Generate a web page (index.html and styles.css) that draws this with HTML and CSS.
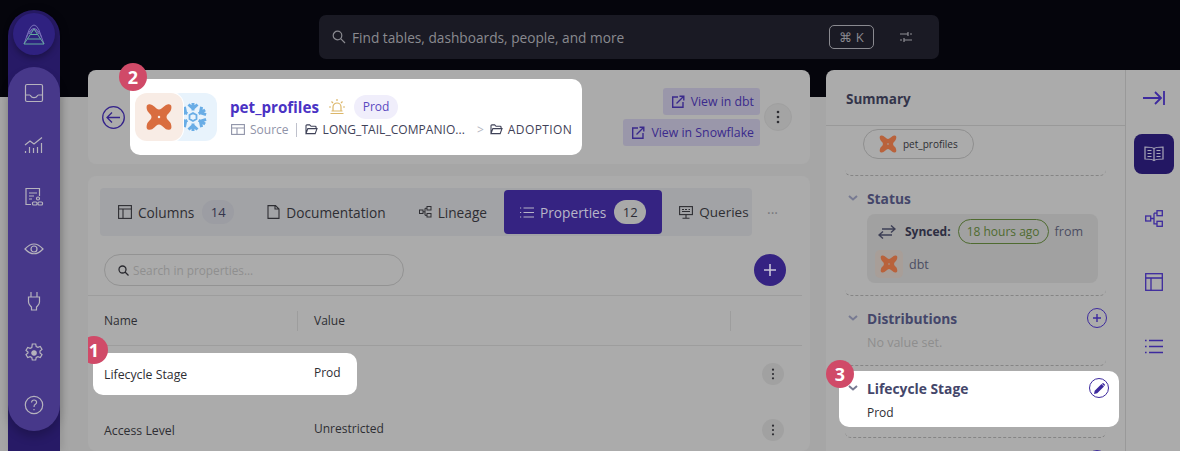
FILE: index.html
```html
<!DOCTYPE html>
<html lang="en">
<head>
    <meta charset="UTF-8">
    <meta name="viewport" content="width=device-width, initial-scale=1.0">
    <title>pet_profiles</title>
    <link rel="stylesheet" href="styles.css">
</head>
<body>
    <svg class="defs" width="0" height="0">
        <symbol id="dbt" viewBox="0 0 24 24">
            <path fill="currentColor" fill-rule="evenodd" d="M2.200 5.500Q1.500 2 4 1.800Q6 1.300 8.500 3.800L10 5.200Q12 6.800 14 5.200L15.700 3.800Q18 1.300 20 1.800Q22.500 2 21.800 5.500Q21.500 7.500 19.800 9L18.800 10Q17.200 12 18.800 14L19.800 15Q21.500 16.500 21.800 18.500Q22.500 22 20 22.200Q18 22.700 15.700 20.200L14 18.800Q12 17.200 10 18.800L8.500 20.200Q6 22.700 4 22.200Q1.500 22 2.200 18.500Q2.500 16.500 4.200 15L5.200 14Q6.800 12 5.200 10L4.200 9Q2.500 7.500 2.200 5.500ZM12 11a1 1 0 1 0 0 2a1 1 0 0 0 0-2Z"/>
        </symbol>
        <symbol id="folder" viewBox="0 0 14 12">
            <path fill="none" stroke="currentColor" stroke-width="1.2" d="M1 10.500V2a1 1 0 0 1 1-1h3l1.500 1.500H11a1 1 0 0 1 1 1V5M1 10.500L3 5h10l-2 5.500Z"/>
        </symbol>
        <symbol id="ext" viewBox="0 0 14 14">
            <path fill="none" stroke="currentColor" stroke-width="1.4" d="M7 2H1.700v10.300h10.300V7M5.500 8.500L12.500 1.500M8.500 1.200h4.300v4.300"/>
        </symbol>
        <symbol id="kebab" viewBox="0 0 4 14">
            <circle cx="2" cy="2" r="1.300" fill="currentColor"/><circle cx="2" cy="7" r="1.300" fill="currentColor"/><circle cx="2" cy="12" r="1.300" fill="currentColor"/>
        </symbol>
        <symbol id="chev" viewBox="0 0 10 6">
            <path fill="none" stroke="currentColor" stroke-width="2" d="M1 1l4 3.500L9 1"/>
        </symbol>
        <symbol id="flake-arm" viewBox="0 0 30 30" overflow="visible">
            <path d="M15 1v7.500M10.500 2.500L15 6.500l4.500-4"/>
        </symbol>
    </svg>

    <div class="app">
        <nav class="rail">
            <div class="rail-head">
                <div class="logo">
                    <svg width="22" height="22" viewBox="0 0 22 22" fill="none" stroke-width="1">
                        <path d="M1 21L6 7Q11-3 16 7L21 21" stroke="#7a70bb"/>
                        <path d="M3.500 14Q11-3 18.500 14" stroke="#7a70bb"/>
                        <path d="M6 11Q11 2 16 11" stroke="#7a70bb"/>
                        <path d="M11 6L21 21H1ZM7.500 11.500h7M4.500 16h13" stroke="#63ab9e"/>
                    </svg>
                </div>
            </div>
            <div class="rail-menu">
                <a class="rail-item"><svg width="20" height="20" viewBox="0 0 20 20"><rect x="1.500" y="1.500" width="17" height="17" rx="1.500"/><path d="M1.500 12h4q1 0 1.500 1.300t3 1.300t3-1.300t1.500-1.300h4"/></svg></a>
                <a class="rail-item"><svg width="20" height="20" viewBox="0 0 20 20"><path d="M1 10l5-4 4 3 8-6.500M1.500 18v-2M5.500 18v-6M9.500 18v-5M13.500 18v-6M17.500 18V8"/></svg></a>
                <a class="rail-item"><svg width="20" height="20" viewBox="0 0 20 20"><path d="M7 17.500H2V1.500h13.500v7.500M5 6h8M5 9h5M5 12h3"/><circle cx="14" cy="11.500" r="1.500"/><rect x="8.500" y="15" width="4.500" height="3" rx="1"/><rect x="14" y="15" width="4.500" height="3" rx="1"/></svg></a>
                <a class="rail-item"><svg width="20" height="20" viewBox="0 0 20 20"><path d="M1 10q9-10 18 0q-9 9.500-18 0Z"/><circle cx="10" cy="10" r="3"/></svg></a>
                <a class="rail-item"><svg width="20" height="20" viewBox="0 0 20 20"><path d="M7 1v5M13 1v5M4.500 6h11v5q0 2-2 4l-1 1v3h-5v-3l-1-1q-2-2-2-4Z"/></svg></a>
                <a class="rail-item"><svg width="20" height="20" viewBox="0 0 20 20"><path d="M8.300 1h3.400l.5 2.600 1.700.8 2.400-1 1.700 3-2 1.700v1.800l2 1.700-1.700 3-2.400-1-1.700.8-.5 2.600H8.300l-.5-2.600-1.700-.8-2.400 1-1.700-3 2-1.700V9.100l-2-1.700 1.700-3 2.400 1 1.700-.8Z"/><circle cx="10" cy="10" r="2.200" fill="currentColor"/></svg></a>
                <a class="rail-item"><svg width="20" height="20" viewBox="0 0 20 20"><circle cx="10" cy="10" r="8.700"/><path d="M7.500 7.500q.3-2.500 2.600-2.500t2.500 2.200q0 1.300-1.300 2.100T10 12"/><path d="M10 14v1.200"/></svg></a>
            </div>
        </nav>

        <div class="workspace">
            <header class="topbar">
                <div class="global-search">
                    <svg width="14" height="14" viewBox="0 0 14 14" fill="none" stroke="#8a8a90" stroke-width="1.200"><circle cx="5.500" cy="5.500" r="4.300"/><path d="M8.700 8.700L13 13"/></svg>
                    <span class="global-search-text">Find tables, dashboards, people, and more</span>
                    <span class="kbd">⌘ K</span>
                    <svg class="filter-icon" width="14" height="12" viewBox="0 0 14 12" fill="none" stroke="#8e8e94" stroke-width="1.200"><path d="M1 3h8M11 3h2M9 1v4M1 9h2M5 9h8M5 7v4"/></svg>
                </div>
            </header>

            <div class="panels">
                <main class="entity">
                    <section class="card entity-head">
                        <button class="back">
                            <svg width="23" height="23" viewBox="0 0 23 23" fill="none" stroke="#34238a" stroke-width="1.300"><circle cx="11.500" cy="11.500" r="10.800"/><path d="M18 11.500H5M10 6.500l-5 5 5 5"/></svg>
                        </button>
                        <div class="entity-info">
                            <span class="badge badge-two">2</span>
                            <div class="tiles">
                                <div class="tile tile-dbt"><svg width="30" height="30"><use href="#dbt"/></svg></div>
                                <div class="tile tile-snow">
                                    <svg class="flake" width="30" height="30" viewBox="0 0 30 30">
                                        <use href="#flake-arm"/>
                                        <use href="#flake-arm" transform="rotate(60 15 15)"/>
                                        <use href="#flake-arm" transform="rotate(120 15 15)"/>
                                        <use href="#flake-arm" transform="rotate(180 15 15)"/>
                                        <use href="#flake-arm" transform="rotate(240 15 15)"/>
                                        <use href="#flake-arm" transform="rotate(300 15 15)"/>
                                        <path d="M15 11l3.500 2v4L15 19l-3.500-2v-4Z" stroke-width="1.800"/>
                                    </svg>
                                </div>
                            </div>
                            <div class="entity-text">
                                <div class="entity-title">
                                    <span class="entity-name">pet_profiles</span>
                                    <svg width="16" height="16" viewBox="0 0 16 16" fill="none" stroke="#dcb76a" stroke-width="1.200"><path d="M4 12V8a4 4 0 0 1 8 0v4M1.500 14.500h13M2.500 12h11M8 0v2M2.500 2.500L4 4M13.500 2.500L12 4M0 8h2M14 8h2"/></svg>
                                    <span class="env-pill">Prod</span>
                                </div>
                                <div class="crumbs">
                                    <svg class="crumb-type" width="14" height="11" viewBox="0 0 14 11" fill="none" stroke="currentColor" stroke-width="1.100"><rect x=".6" y=".6" width="12.800" height="9.800"/><path d="M.6 4h12.800M6 4v6.400"/></svg>
                                    <span class="crumb-source">Source</span>
                                    <span class="crumb-sep"></span>
                                    <svg class="crumb-folder" width="13" height="11"><use href="#folder"/></svg>
                                    <span class="crumb-db">LONG_TAIL_COMPANIO...</span>
                                    <span class="crumb-arrow">&gt;</span>
                                    <svg class="crumb-folder" width="13" height="11"><use href="#folder"/></svg>
                                    <span class="crumb-schema">ADOPTION</span>
                                </div>
                            </div>
                        </div>
                        <div class="view-links">
                            <a class="view-link"><svg width="14" height="14"><use href="#ext"/></svg>View in dbt</a>
                            <a class="view-link"><svg width="14" height="14"><use href="#ext"/></svg>View in Snowflake</a>
                        </div>
                        <button class="more"><svg width="4" height="14"><use href="#kebab"/></svg></button>
                    </section>

                    <section class="card entity-body">
                        <div class="tabs-row">
                            <div class="tabs">
                                <a class="tab">
                                    <svg width="14" height="14" viewBox="0 0 14 14" fill="none" stroke="currentColor" stroke-width="1.100"><rect x=".6" y=".6" width="12.800" height="12.800"/><path d="M.6 4h12.800M5 4v9.400"/></svg>
                                    Columns<span class="count">14</span>
                                </a>
                                <a class="tab">
                                    <svg width="13" height="14" viewBox="0 0 13 14" fill="none" stroke="currentColor" stroke-width="1.100"><path d="M1 .6h7.500L12 4v9.400H1ZM8 .6V4h4"/></svg>
                                    Documentation
                                </a>
                                <a class="tab">
                                    <svg width="13" height="12" viewBox="0 0 13 12" fill="none" stroke="currentColor" stroke-width="1"><rect x=".5" y="4" width="3.500" height="3.500"/><rect x="8" y=".5" width="4" height="3.500"/><rect x="8" y="7.500" width="4" height="3.500"/><path d="M4 5.800h2M6 2.300v7h2M6 2.300h2"/></svg>
                                    Lineage
                                </a>
                                <a class="tab tab-active">
                                    <svg width="14" height="11" viewBox="0 0 14 11" fill="none" stroke="currentColor" stroke-width="1.100"><path d="M3.500 1H14M3.500 5.500H14M3.500 10H14M0 1h1.200M0 5.500h1.200M0 10h1.200"/></svg>
                                    Properties<span class="count">12</span>
                                </a>
                                <a class="tab">
                                    <svg width="14" height="13" viewBox="0 0 14 13" fill="none" stroke="currentColor" stroke-width="1.100"><rect x=".6" y=".6" width="12.800" height="8"/><path d="M7 8.600V12M3.500 12.300h7M3 3.500h2M6 3.500h2M9.500 3.500h1.500M3 5.500h8" /></svg>
                                    Queries
                                </a>
                            </div>
                            <span class="tabs-more">···</span>
                        </div>

                        <div class="toolbar">
                            <div class="prop-search">
                                <svg width="11" height="11" viewBox="0 0 11 11" fill="none" stroke="#2a2a30" stroke-width="1.300"><circle cx="4.500" cy="4.500" r="3.500"/><path d="M7 7l3.500 3.500"/></svg>
                                <span>Search in properties...</span>
                            </div>
                            <button class="add">
                                <svg width="12" height="12" viewBox="0 0 12 12" stroke="#c9c6d8" stroke-width="1.600"><path d="M6 0v12M0 6h12"/></svg>
                            </button>
                        </div>

                        <div class="prop-head">
                            <div class="prop-head-cell prop-head-name">Name</div>
                            <div class="prop-head-cell prop-head-value">Value</div>
                        </div>

                        <div class="prop-row">
                            <div class="prop-cells prop-cells-hl">
                                <span class="badge badge-one">1</span>
                                <span class="prop-name">Lifecycle Stage</span>
                                <span class="prop-value">Prod</span>
                            </div>
                            <button class="row-more"><svg width="4" height="12"><use href="#kebab"/></svg></button>
                        </div>
                        <div class="prop-row">
                            <div class="prop-cells">
                                <span class="prop-name">Access Level</span>
                                <span class="prop-value">Unrestricted</span>
                            </div>
                            <button class="row-more"><svg width="4" height="12"><use href="#kebab"/></svg></button>
                        </div>
                    </section>
                </main>

                <aside class="summary">
                    <div class="summary-main">
                        <h3 class="summary-title">Summary</h3>
                        <div class="section section-owner">
                            <span class="owner-pill"><svg class="dbt-dim" width="20" height="20"><use href="#dbt"/></svg>pet_profiles</span>
                        </div>
                        <div class="section">
                            <div class="section-head"><svg class="chev" width="10" height="6"><use href="#chev"/></svg><span>Status</span></div>
                            <div class="status-box">
                                <div class="status-line">
                                    <svg width="18" height="14" viewBox="0 0 18 14" fill="none" stroke="#3d3f55" stroke-width="1.400"><path d="M4 4h13M13 .5L17 4l-4 3.500" /><path d="M14 10H1M5 6.500L1 10l4 3.500"/></svg>
                                    <b class="synced">Synced:</b>
                                    <span class="ago">18 hours ago</span>
                                    <span class="from">from</span>
                                </div>
                                <div class="status-line status-source">
                                    <span class="mini-tile"><svg class="dbt-dim" width="20" height="20"><use href="#dbt"/></svg></span>
                                    <span class="from">dbt</span>
                                </div>
                            </div>
                        </div>
                        <div class="section">
                            <div class="section-head">
                                <svg class="chev" width="10" height="6"><use href="#chev"/></svg><span>Distributions</span>
                                <button class="round-btn"><svg width="8" height="8" viewBox="0 0 8 8" stroke="currentColor" stroke-width="1.400"><path d="M4 0v8M0 4h8"/></svg></button>
                            </div>
                            <p class="section-empty">No value set.</p>
                        </div>
                        <div class="section section-stage">
                            <div class="section-hl">
                                <span class="badge badge-three">3</span>
                                <div class="section-head">
                                    <svg class="chev" width="10" height="6"><use href="#chev"/></svg><span>Lifecycle Stage</span>
                                    <button class="round-btn"><svg width="11" height="11" viewBox="0 0 11 11"><path fill="currentColor" d="M0 11l.7-3.200L7.500 1l2.500 2.500-6.800 6.800ZM8.300.4q.8-.7 1.500 0l.8.800q.7.700 0 1.400l-.3.300L7.900.7Z"/></svg></button>
                                </div>
                                <p class="section-value">Prod</p>
                            </div>
                        </div>
                        <div class="section section-next">
                            <div class="section-head">
                                <button class="round-btn"></button>
                            </div>
                        </div>
                    </div>

                    <div class="summary-tools">
                        <a class="tool tool-collapse"><svg width="22" height="14" viewBox="0 0 22 14" fill="none" stroke="currentColor" stroke-width="1.800"><path d="M0 7h18M12 1l6 6-6 6M21 0v14"/></svg></a>
                        <a class="tool tool-active"><svg width="20" height="16" viewBox="0 0 20 16" fill="none" stroke="currentColor" stroke-width="1.200"><path d="M10 2.500Q8 1 1 1v12q7 0 9 1.500q2-1.500 9-1.500V1q-7 0-9 1.500ZM10 2.500v12M3.500 4.500h4M3.500 7.500h4M3.500 10.500h4M12.500 4.500h4M12.500 7.500h4M12.500 10.500h4"/></svg></a>
                        <a class="tool"><svg width="18" height="17" viewBox="0 0 18 17" fill="none" stroke="currentColor" stroke-width="1.300"><rect x=".7" y="6" width="5" height="5"/><rect x="12" y=".7" width="5.300" height="5"/><rect x="12" y="11.300" width="5.300" height="5"/><path d="M5.700 8.500h3.300M9 3.200v10.600h3M9 3.200h3"/></svg></a>
                        <a class="tool"><svg width="18" height="18" viewBox="0 0 18 18" fill="none" stroke="currentColor" stroke-width="1.300"><rect x=".7" y=".7" width="16.600" height="16.600"/><path d="M.7 5h16.600M6 5v12.300"/></svg></a>
                        <a class="tool"><svg width="18" height="15" viewBox="0 0 18 15" fill="none" stroke="currentColor" stroke-width="1.400"><path d="M4 1.500h14M4 7.500h14M4 13.500h14M0 1.500h1.600M0 7.500h1.600M0 13.500h1.600"/></svg></a>
                    </div>
                </aside>
            </div>
        </div>
    </div>
</body>
</html>
```
FILE: styles.css
```css
* {
    box-sizing: border-box;
}

html, body {
    height: 100%;
}

body {
    margin: 0;
    overflow: hidden;
    background: linear-gradient(#05050c 97px, #a6a6a6 97px);
    font-family: "Open Sans", Arial, sans-serif;
    font-size: 13px;
    color: #2e2e33;
}

button {
    padding: 0;
    border: 0;
    background: none;
    font: inherit;
}

p, h3 {
    margin: 0;
}

.defs {
    display: block;
    height: 0;
}

.app {
    display: flex;
    height: 451px;
    overflow: hidden;
}

/* left rail */
.rail {
    flex: none;
    width: 52px;
    margin: 10px 0 0 8px;
    border-radius: 26px 26px 0 0;
    background: #271a66;
    box-shadow: 2px 0 8px rgba(0, 0, 0, .12);
    z-index: 2;
}

.rail-head {
    height: 57px;
    padding: 3px 5px 0;
}

.logo {
    display: flex;
    justify-content: center;
    align-items: center;
    width: 42px;
    height: 42px;
    border-radius: 50%;
    background: #2f2180;
    box-shadow: 0 3px 6px rgba(0, 0, 0, .3);
}

.rail-menu {
    border-radius: 26px;
    background: #47388a;
    box-shadow: 0 6px 10px rgba(0, 0, 0, .2);
}

.rail-item {
    display: flex;
    justify-content: center;
    align-items: center;
    height: 52px;
    color: #b6b3bd;
}

.rail-item svg {
    fill: none;
    stroke: currentColor;
    stroke-width: 1.200;
}

.workspace {
    flex: 1;
    display: flex;
    flex-direction: column;
    min-width: 0;
}

/* top search */
.topbar {
    flex: none;
    height: 70px;
    padding: 15px 0 0 259px;
}

.global-search {
    display: flex;
    align-items: center;
    width: 620px;
    height: 44px;
    padding: 0 26px 0 13px;
    border-radius: 7px;
    background: #1a1a24;
    color: #8a8a90;
}

.global-search-text {
    margin-left: 6px;
    font-size: 13.700px;
}

.kbd {
    margin-left: auto;
    width: 45px;
    height: 24px;
    border: 1px solid #8a8a90;
    border-radius: 5px;
    text-align: center;
    line-height: 22px;
}

.filter-icon {
    margin-left: 25px;
}

.panels {
    flex: 1;
    display: flex;
    min-height: 0;
    padding-left: 28px;
}

.entity {
    flex: none;
    width: 722px;
    margin-right: 16px;
}

.card {
    border-radius: 8px;
    background: #ababab;
}

/* entity header */
.entity-head {
    display: flex;
    align-items: center;
    height: 94px;
    padding: 0 18px 0 14px;
}

.back {
    display: flex;
    flex: none;
    margin-right: 5px;
}

.entity-info {
    position: relative;
    display: flex;
    align-items: center;
    width: 452px;
    height: 76px;
    padding-left: 5px;
    border-radius: 10px;
    background: #fff;
}

.badge {
    position: absolute;
    display: flex;
    justify-content: center;
    align-items: center;
    width: 28px;
    height: 28px;
    border-radius: 50%;
    background: #d04a68;
    color: #fff;
    font-size: 18px;
    font-weight: 700;
    z-index: 3;
}

.badge-one {
    left: -13px;
    top: -17px;
}

.badge-two {
    left: -11px;
    top: -16px;
}

.badge-three {
    left: -13px;
    top: -11px;
}

.tiles {
    display: flex;
    flex: none;
    margin-right: 13px;
}

.tile {
    display: flex;
    justify-content: center;
    align-items: center;
    width: 48px;
    height: 48px;
    border-radius: 12px;
}

.tile-dbt {
    position: relative;
    background: #f8ece5;
    box-shadow: 0 0 0 1px #fff;
    color: #d96d3f;
    z-index: 1;
}

.tile-snow {
    margin-left: -14px;
    background: #e8f3fc;
}

.flake {
    fill: none;
    stroke: #69ade6;
    stroke-width: 3;
}

.dbt-dim {
    flex: none;
    color: #b9623b;
}

.entity-title {
    display: flex;
    align-items: center;
}

.entity-name {
    margin-right: 10px;
    color: #4a32c4;
    font-size: 15.200px;
    font-weight: 700;
}

.env-pill {
    margin-left: 9px;
    width: 44px;
    border-radius: 12px;
    background: #f0eefb;
    color: #5a48c0;
    font-size: 12px;
    line-height: 24px;
    text-align: center;
}

.crumbs {
    display: flex;
    align-items: center;
    height: 20px;
    margin-top: 1px;
    white-space: nowrap;
    color: #3f4258;
    font-size: 12px;
}

.crumb-type {
    margin: 0 5px 0 1px;
    color: #8f93a8;
}

.crumb-source {
    color: #8f93a8;
}

.crumb-sep {
    width: 1px;
    height: 14px;
    margin: 0 8px 0 7px;
    background: #bfc1cc;
}

.crumb-folder {
    margin-right: 5px;
}

.crumb-db {
    letter-spacing: .05px;
}

.crumb-arrow {
    margin: 0 6px 0 12px;
    color: #b4b6c2;
}

.crumb-schema {
    letter-spacing: .4px;
}

.view-links {
    display: flex;
    flex-direction: column;
    align-items: flex-end;
    gap: 4px;
    margin-left: auto;
}

.view-link {
    display: flex;
    align-items: center;
    gap: 6px;
    height: 27px;
    padding: 0 6px 0 8px;
    border-radius: 3px;
    background: #9a97aa;
    color: #3a2a8c;
    font-size: 12.300px;
}

.more {
    display: flex;
    justify-content: center;
    align-items: center;
    width: 28px;
    height: 28px;
    margin-left: 4px;
    border: 1px solid #a0a0a0;
    border-radius: 50%;
    background: #a4a4a4;
    color: #2e2e33;
}

/* properties panel */
.entity-body {
    height: 275px;
    margin-top: 12px;
    overflow: hidden;
}

.tabs-row {
    display: flex;
    align-items: center;
    padding: 12px 0 0 12px;
}

.tabs {
    display: flex;
    align-items: center;
    gap: 1px;
    width: 652px;
    height: 48px;
    padding-left: 2px;
    border-radius: 4px;
    background: #a2a3a6;
    overflow: hidden;
    white-space: nowrap;
}

.tab {
    display: flex;
    align-items: center;
    flex: none;
    gap: 6px;
    height: 44px;
    padding: 0 16px;
    border-radius: 4px;
    font-size: 13.700px;
}

.tab:last-child {
    padding-right: 0;
    font-size: 13.500px;
}

.tab-active {
    background: #352382;
    color: #b8b5c8;
}

.count {
    margin-left: 2px;
    width: 32px;
    border-radius: 12px;
    background: #9c9da3;
    color: #35364c;
    font-size: 13px;
    line-height: 24px;
    text-align: center;
}

.tab-active .count {
    background: #a9a9a9;
    color: #2c2c35;
}

.tabs-more {
    margin-left: 15px;
    color: #77777c;
    font-size: 14px;
}

.toolbar {
    display: flex;
    align-items: center;
    height: 32px;
    margin-top: 18px;
    padding: 0 24px 0 16px;
}

.prop-search {
    display: flex;
    align-items: center;
    gap: 4px;
    width: 300px;
    height: 32px;
    padding-left: 13px;
    border: 1px solid #939393;
    border-radius: 16px;
    color: #8f8f8f;
    font-size: 11.800px;
}

.add {
    display: flex;
    justify-content: center;
    align-items: center;
    width: 32px;
    height: 32px;
    margin-left: auto;
    border-radius: 50%;
    background: #352382;
}

.prop-head {
    display: flex;
    align-items: center;
    height: 51px;
    margin: 9px 8px 0 0;
    padding-left: 16px;
    border-top: 1px solid #9d9d9d;
    border-bottom: 1px solid #9d9d9d;
}

.prop-head-cell {
    height: 20px;
    line-height: 20px;
    font-size: 12px;
}

.prop-head-name {
    width: 194px;
    border-right: 1px solid #9d9d9d;
}

.prop-head-value {
    width: 433px;
    padding-left: 16px;
    border-right: 1px solid #9d9d9d;
}

.prop-row {
    display: flex;
    align-items: center;
    height: 56px;
    padding: 0 26px 0 16px;
}

.prop-cells {
    position: relative;
    display: flex;
    align-items: center;
    font-size: 12.300px;
}

.prop-cells-hl {
    width: 264px;
    height: 42px;
    margin-left: -11px;
    padding-left: 11px;
    border-radius: 10px;
    background: #fff;
}

.prop-name {
    flex: none;
    width: 210px;
}

.prop-value {
    margin-bottom: 3px;
    font-size: 12px;
}

.row-more {
    display: flex;
    justify-content: center;
    align-items: center;
    width: 22px;
    height: 22px;
    margin-left: auto;
    border-radius: 50%;
    background: #a1a1a1;
    color: #2e2e33;
}

/* summary */
.summary {
    flex: 1;
    display: flex;
    height: 381px;
    border-radius: 8px 0 0 0;
    background: #ababab;
}

.summary-main {
    flex: none;
    width: 300px;
    border-right: 1px solid #999;
}

.summary-title {
    height: 56px;
    padding-left: 20px;
    border-bottom: 1px solid #999;
    color: #33344a;
    font-size: 13.500px;
    font-weight: 700;
    line-height: 58px;
}

.section {
    margin: 0 19px 0 19px;
    padding: 12px 0;
    border-bottom: 1px dashed #858585;
    border-radius: 0 0 6px 6px;
}

.section-owner {
    height: 50px;
    padding: 3px 0 0 18px;
}

.owner-pill {
    display: inline-flex;
    align-items: center;
    gap: 5px;
    width: 111px;
    height: 30px;
    padding-left: 14px;
    border: 1px solid #8f8f8f;
    border-radius: 15px;
    font-size: 10px;
}

.section-head {
    display: flex;
    align-items: center;
    gap: 9px;
    height: 20px;
    padding-left: 3px;
    color: #44466a;
    font-size: 13.800px;
    font-weight: 700;
}

.chev {
    flex: none;
    color: #777a92;
}

.round-btn {
    display: flex;
    justify-content: center;
    align-items: center;
    width: 20px;
    height: 20px;
    margin: 0 -1px 0 auto;
    border: 1px solid #3d2a9e;
    border-radius: 50%;
    color: #3d2a9e;
}

.status-box {
    width: 231px;
    height: 69px;
    margin: 6px 0 0 22px;
    padding: 5px 0 0 11px;
    border-radius: 8px;
    background: #a1a1a1;
}

.status-line {
    display: flex;
    align-items: center;
    height: 25px;
}

.synced {
    margin-left: 9px;
    color: #2d2e42;
    font-size: 12px;
}

.ago {
    margin-left: 7px;
    width: 91px;
    height: 25px;
    border: 1px solid #4f6b30;
    border-radius: 13px;
    color: #4f6b30;
    font-size: 12px;
    line-height: 23px;
    text-align: center;
}

.from {
    margin-left: 6px;
    color: #4c4d62;
    font-size: 12.500px;
}

.status-source {
    height: 28px;
    margin: 6px 0 0 -3px;
}

.mini-tile {
    display: flex;
    justify-content: center;
    align-items: center;
    width: 28px;
    height: 28px;
    border-radius: 5px;
    background: #a89e98;
}

.section-empty {
    margin: 5px 0 0 22px;
    color: #8e8e8e;
    font-size: 12.500px;
    line-height: 20px;
}

.section-stage {
    padding: 5px 0 10px;
}

.section-hl {
    position: relative;
    height: 56px;
    margin: 0 -13px 0 -6px;
    padding: 7px 11px 0 6px;
    border-radius: 10px;
    background: #fff;
}

.section-value {
    margin: 5px 0 0 22px;
    font-size: 12px;
    line-height: 20px;
}

.section-next {
    border: 0;
}

.summary-tools {
    flex: 1;
    display: flex;
    flex-direction: column;
    align-items: center;
    gap: 24px;
    padding: 8px 0 0 1px;
}

.tool {
    display: flex;
    justify-content: center;
    align-items: center;
    width: 40px;
    height: 40px;
    border-radius: 8px;
    color: #3d2a9e;
}

.tool-collapse {
    margin-bottom: -8px;
}

.tool-active {
    background: #231763;
    color: #a9a7b8;
}
```
